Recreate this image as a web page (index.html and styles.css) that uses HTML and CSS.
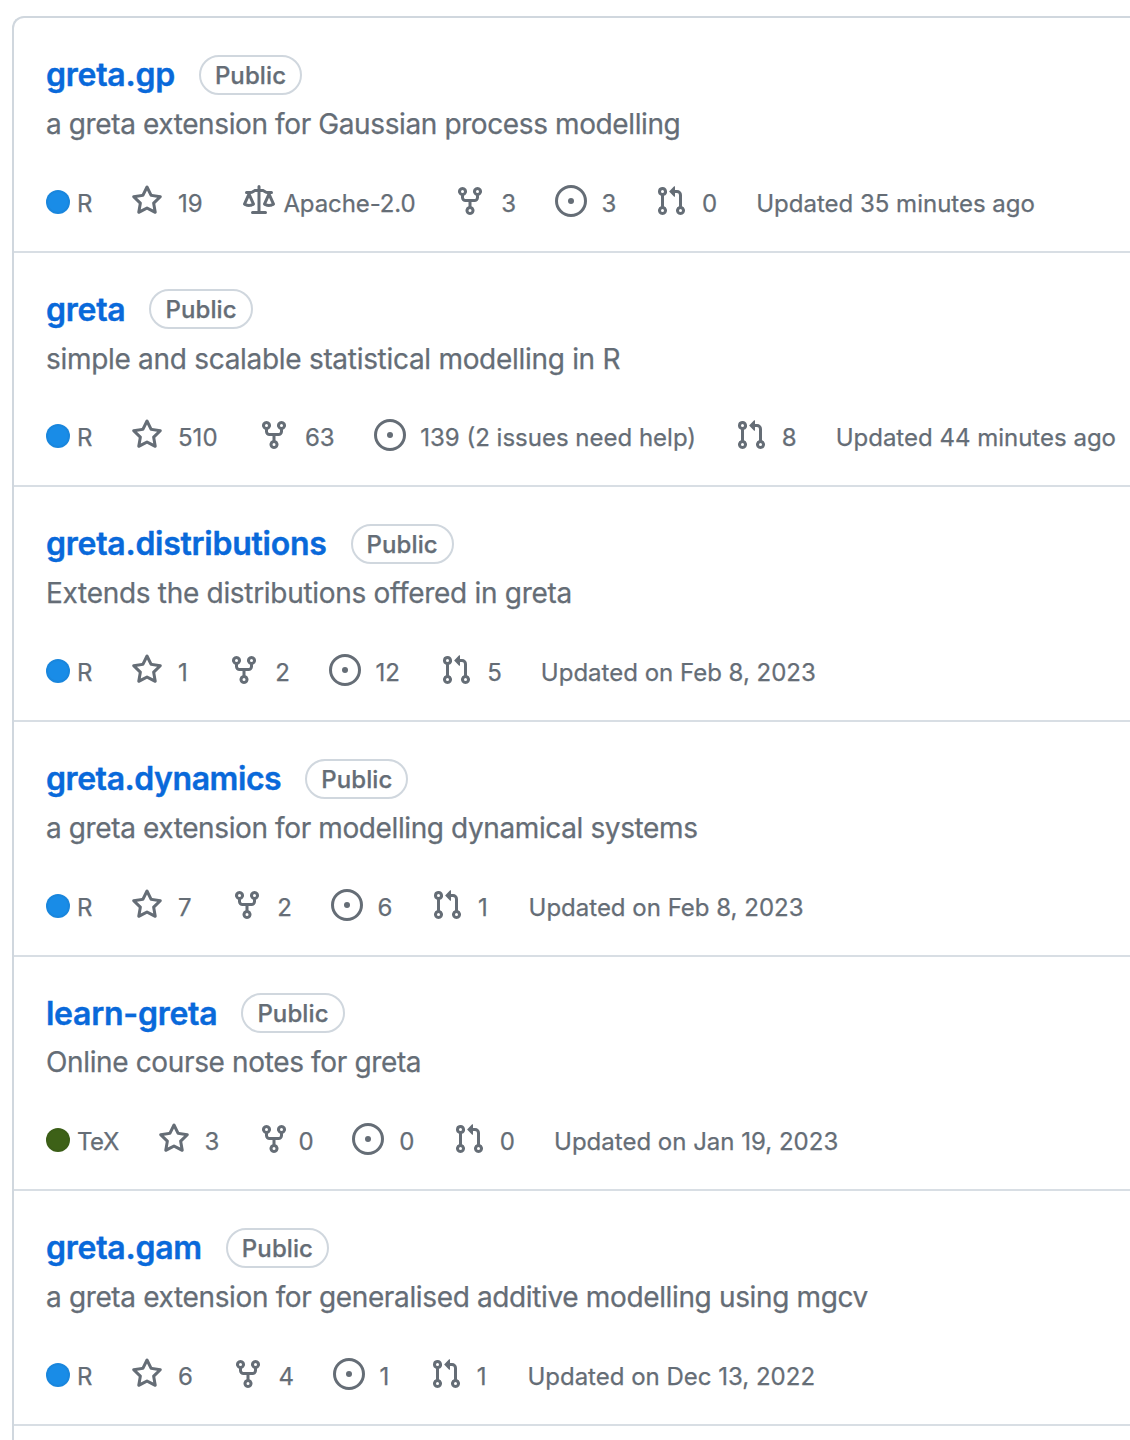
FILE: index.html
```
<!DOCTYPE html>
<html lang="en">
<head>
<meta charset="utf-8">
<title>Repositories</title>
<link rel="stylesheet" href="styles.css">
</head>
<body>
<svg class="sprite" aria-hidden="true">
  <symbol id="star" viewBox="0 0 16 16"><path d="M8 .25a.75.75 0 0 1 .673.418l1.882 3.815 4.21.612a.75.75 0 0 1 .416 1.279l-3.046 2.97.719 4.192a.751.751 0 0 1-1.088.791L8 12.347l-3.766 1.98a.75.75 0 0 1-1.088-.79l.72-4.194L.818 6.374a.75.75 0 0 1 .416-1.28l4.21-.611L7.327.668A.75.75 0 0 1 8 .25Zm0 2.445L6.615 5.5a.75.75 0 0 1-.564.41l-3.097.45 2.24 2.184a.75.75 0 0 1 .216.664l-.528 3.084 2.769-1.456a.75.75 0 0 1 .698 0l2.77 1.456-.53-3.084a.75.75 0 0 1 .216-.664l2.24-2.183-3.096-.45a.75.75 0 0 1-.564-.41L8 2.694Z"/></symbol>
  <symbol id="law" viewBox="0 0 16 16"><path d="M8.75.75V2h.985c.304 0 .603.08.867.231l1.29.736c.038.022.08.033.124.033h2.234a.75.75 0 0 1 0 1.5h-.427l2.111 4.692a.75.75 0 0 1-.154.838l-.53-.53.529.531-.001.002-.002.002-.006.006-.006.005-.01.01-.045.04c-.21.176-.441.327-.686.45C14.556 10.78 13.88 11 13 11a4.498 4.498 0 0 1-2.023-.454 3.544 3.544 0 0 1-.686-.45l-.045-.04-.016-.015-.006-.006-.004-.004v-.001a.75.75 0 0 1-.154-.838L12.178 4.5h-.162c-.305 0-.604-.079-.868-.231l-1.29-.736a.245.245 0 0 0-.124-.033H8.75V13h2.5a.75.75 0 0 1 0 1.5h-6.5a.75.75 0 0 1 0-1.5h2.5V3.5h-.984a.245.245 0 0 0-.124.033l-1.289.737c-.265.15-.564.23-.869.23h-.162l2.112 4.692a.75.75 0 0 1-.154.838l-.53-.53.529.531-.001.002-.002.002-.006.006-.016.015-.045.04c-.21.176-.441.327-.686.45C4.556 10.78 3.88 11 3 11a4.498 4.498 0 0 1-2.023-.454 3.544 3.544 0 0 1-.686-.45l-.045-.04-.016-.015-.006-.006-.004-.004v-.001a.75.75 0 0 1-.154-.838L2.178 4.5H1.75a.75.75 0 0 1 0-1.5h2.234a.249.249 0 0 0 .125-.033l1.288-.737c.265-.15.564-.23.869-.23h.984V.75a.75.75 0 0 1 1.5 0Zm2.945 8.477c.285.135.718.273 1.305.273s1.02-.138 1.305-.273L13 6.327Zm-10 0c.285.135.718.273 1.305.273s1.02-.138 1.305-.273L3 6.327Z"/></symbol>
  <symbol id="fork" viewBox="0 0 16 16"><path d="M5 5.372v.878c0 .414.336.75.75.75h4.5a.75.75 0 0 0 .75-.75v-.878a2.25 2.25 0 1 1 1.5 0v.878a2.25 2.25 0 0 1-2.25 2.25h-1.5v2.128a2.251 2.251 0 1 1-1.5 0V8.5h-1.5A2.25 2.25 0 0 1 3.5 6.25v-.878a2.25 2.25 0 1 1 1.5 0ZM5 3.25a.75.75 0 1 0-1.5 0 .75.75 0 0 0 1.5 0Zm6.75.75a.75.75 0 1 0 0-1.5.75.75 0 0 0 0 1.5Zm-3 8.75a.75.75 0 1 0-1.5 0 .75.75 0 0 0 1.5 0Z"/></symbol>
  <symbol id="issue" viewBox="0 0 16 16"><path d="M8 9.5a1.5 1.5 0 1 0 0-3 1.5 1.5 0 0 0 0 3Z"/><path d="M8 0a8 8 0 1 1 0 16A8 8 0 0 1 8 0ZM1.5 8a6.5 6.5 0 1 0 13 0 6.5 6.5 0 0 0-13 0Z"/></symbol>
  <symbol id="pull" viewBox="0 0 16 16"><path d="M1.5 3.25a2.25 2.25 0 1 1 3 2.122v5.256a2.251 2.251 0 1 1-1.5 0V5.372A2.25 2.25 0 0 1 1.5 3.25Zm5.677-.177L9.573.677A.25.25 0 0 1 10 .854V2.5h1A2.5 2.5 0 0 1 13.5 5v5.628a2.251 2.251 0 1 1-1.5 0V5a1 1 0 0 0-1-1h-1v1.646a.25.25 0 0 1-.427.177L7.177 3.427a.25.25 0 0 1 0-.354ZM3.75 2.5a.75.75 0 1 0 0 1.5.75.75 0 0 0 0-1.5Zm0 9.5a.75.75 0 1 0 0 1.5.75.75 0 0 0 0-1.5Zm8.25.75a.75.75 0 1 0 1.5 0 .75.75 0 0 0-1.5 0Z"/></symbol>
</svg>

<ul class="repo-list">
  <li class="repo">
    <div class="heading"><a class="name">greta.gp</a><span class="badge">Public</span></div>
    <p class="description tight">a greta extension for Gaussian process modelling</p>
    <div class="meta">
      <span class="language"><i class="dot"></i>R</span>
      <span class="stat"><svg class="icon"><use href="#star"/></svg><span class="narrow">19</span></span>
      <span class="stat license"><svg class="icon"><use href="#law"/></svg>Apache-2.0</span>
      <span class="stat"><svg class="icon"><use href="#fork"/></svg>3</span>
      <span class="stat"><svg class="icon"><use href="#issue"/></svg>3</span>
      <span class="stat"><svg class="icon"><use href="#pull"/></svg>0</span>
      <span class="updated">Updated 35 minutes ago</span>
    </div>
  </li>
  <li class="repo">
    <div class="heading"><a class="name">greta</a><span class="badge">Public</span></div>
    <p class="description loose">simple and scalable statistical modelling in R</p>
    <div class="meta">
      <span class="language"><i class="dot"></i>R</span>
      <span class="stat"><svg class="icon"><use href="#star"/></svg><span class="narrow">510</span></span>
      <span class="stat"><svg class="icon"><use href="#fork"/></svg>63</span>
      <span class="stat"><svg class="icon"><use href="#issue"/></svg>139 (2 issues need help)</span>
      <span class="stat"><svg class="icon"><use href="#pull"/></svg>8</span>
      <span class="updated">Updated 44 minutes ago</span>
    </div>
  </li>
  <li class="repo">
    <div class="heading"><a class="name">greta.distributions</a><span class="badge">Public</span></div>
    <p class="description loose">Extends the distributions offered in greta</p>
    <div class="meta">
      <span class="language"><i class="dot"></i>R</span>
      <span class="stat"><svg class="icon"><use href="#star"/></svg><span class="narrow">1</span></span>
      <span class="stat"><svg class="icon"><use href="#fork"/></svg>2</span>
      <span class="stat"><svg class="icon"><use href="#issue"/></svg><span class="narrow">12</span></span>
      <span class="stat"><svg class="icon"><use href="#pull"/></svg>5</span>
      <span class="updated">Updated on Feb 8, 2023</span>
    </div>
  </li>
  <li class="repo">
    <div class="heading"><a class="name tight">greta.dynamics</a><span class="badge">Public</span></div>
    <p class="description tight">a greta extension for modelling dynamical systems</p>
    <div class="meta">
      <span class="language"><i class="dot"></i>R</span>
      <span class="stat"><svg class="icon"><use href="#star"/></svg>7</span>
      <span class="stat"><svg class="icon"><use href="#fork"/></svg>2</span>
      <span class="stat"><svg class="icon"><use href="#issue"/></svg>6</span>
      <span class="stat"><svg class="icon"><use href="#pull"/></svg><span class="narrow">1</span></span>
      <span class="updated">Updated on Feb 8, 2023</span>
    </div>
  </li>
  <li class="repo">
    <div class="heading"><a class="name">learn-greta</a><span class="badge">Public</span></div>
    <p class="description">Online course notes for greta</p>
    <div class="meta">
      <span class="language tex"><i class="dot"></i>TeX</span>
      <span class="stat"><svg class="icon"><use href="#star"/></svg>3</span>
      <span class="stat compact"><svg class="icon"><use href="#fork"/></svg>0</span>
      <span class="stat"><svg class="icon"><use href="#issue"/></svg>0</span>
      <span class="stat"><svg class="icon"><use href="#pull"/></svg>0</span>
      <span class="updated">Updated on Jan 19, 2023</span>
    </div>
  </li>
  <li class="repo">
    <div class="heading"><a class="name">greta.gam</a><span class="badge">Public</span></div>
    <p class="description">a greta extension for generalised additive modelling using mgcv</p>
    <div class="meta">
      <span class="language"><i class="dot"></i>R</span>
      <span class="stat"><svg class="icon"><use href="#star"/></svg>6</span>
      <span class="stat"><svg class="icon"><use href="#fork"/></svg>4</span>
      <span class="stat"><svg class="icon"><use href="#issue"/></svg><span class="narrow">1</span></span>
      <span class="stat"><svg class="icon"><use href="#pull"/></svg><span class="narrow">1</span></span>
      <span class="updated">Updated on Dec 13, 2022</span>
    </div>
  </li>
</ul>
</body>
</html>
```
FILE: styles.css
```
* { box-sizing: border-box; }

body {
  margin: 0;
  padding: 16px 0 0 12px;
  background: #fff;
  color: #656d76;
  font-family: Inter, "Liberation Sans", sans-serif;
  -webkit-text-stroke: 0.25px currentColor;
}

.sprite { display: none; }

.repo-list {
  height: 1424px;
  margin: 0;
  padding: 0;
  list-style: none;
  border: 2px solid #d0d7de;
  border-right: 0;
  border-bottom: 0;
  border-top-left-radius: 12px;
}

.repo {
  height: 234.6px;
  padding: 31.8px 0 0 32px;
  border-bottom: 2px solid #d8dee4;
}

.repo:first-child { height: 234.8px; }

.heading {
  display: flex;
  align-items: center;
  gap: 24px;
  height: 48px;
}

.name {
  margin-top: 2.6px;
  color: #0969da;
  font-size: 32px;
  font-weight: 600;
  line-height: 48px;
  letter-spacing: -0.26px;
  -webkit-text-stroke-width: 0.4px;
}

.name.tight { letter-spacing: -0.44px; }

.badge {
  height: 40px;
  margin-top: 1.6px;
  padding: 0 14px;
  border: 2px solid #d0d7de;
  border-radius: 20px;
  font-size: 24px;
  font-weight: 500;
  line-height: 37px;
  letter-spacing: 0.1px;
}

.description {
  margin: 5px 0 0;
  font-size: 28px;
  line-height: 42px;
  letter-spacing: -0.36px;
}

.description.tight { letter-spacing: -0.39px; }
.description.loose { letter-spacing: -0.3px; }

.meta {
  display: flex;
  gap: 38.9px;
  margin-top: 39.8px;
  font-size: 24px;
  line-height: 38px;
  white-space: nowrap;
}

.language, .stat { display: flex; }

.language { gap: 7px; }

.dot {
  width: 24px;
  height: 24px;
  margin-top: 5px;
  border: 2px solid rgba(31, 35, 40, 0.05);
  border-radius: 50%;
  background: #198ce7;
}

.tex { letter-spacing: -0.5px; }
.tex .dot { background: #3d6117; }

.stat { gap: 14.7px; }
.license { gap: 8px; letter-spacing: -0.1px; }
.compact { gap: 8.3px; }
.narrow { margin-right: 1.8px; }

.icon {
  width: 32px;
  height: 32px;
  flex: none;
  fill: currentColor;
  stroke: none;
}

.updated { margin-left: 0.2px; }
```
